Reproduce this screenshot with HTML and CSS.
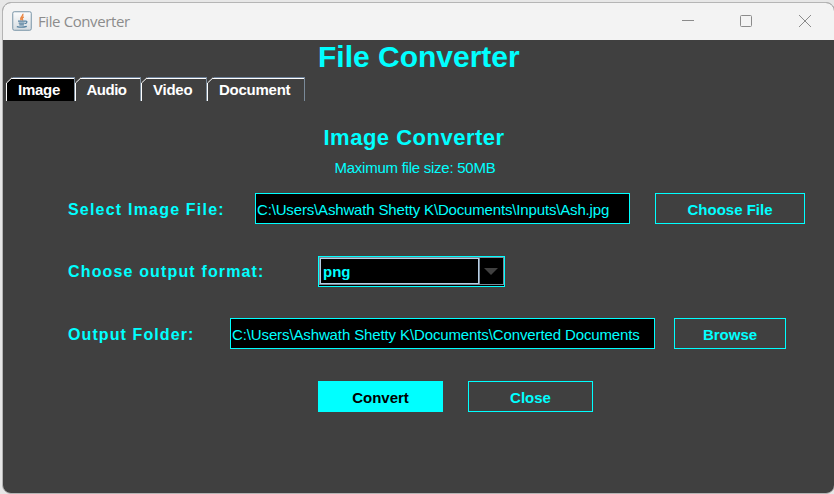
FILE: index.html
```html
<!DOCTYPE html>
<html lang="en">
<head>
<meta charset="utf-8">
<title>File Converter</title>
<link rel="stylesheet" href="styles.css">
</head>
<body>
<div class="window">
  <header class="titlebar">
    <svg class="app-icon" width="20" height="20" viewBox="0 0 20 20" fill="none">
      <defs><linearGradient id="tile" x1="0" y1="0" x2="0" y2="1"><stop offset="0" stop-color="#fdfdfd"/><stop offset="1" stop-color="#d5dce1"/></linearGradient></defs>
      <rect x=".75" y=".75" width="18.5" height="18.5" rx="1.5" fill="url(#tile)" stroke="#7894a6"/>
      <path d="M10.8 2.7c1.2 2.5-3.7 3.4-1.6 6.6M11.9 5.8c-2.3 1-1.8 2 -1.1 3.7" stroke="#ea8744" stroke-width="1.4"/>
      <path d="M6 10.2h7M6.7 12.2h5.8M7.3 13.8h4.6M4.8 15.6c3 .8 7 .7 10-.2M13 10.2c2.7-.7 2.5 2-.2 2.5" stroke="#55809f" stroke-width="1.2"/>
    </svg>
    <span class="window-name">File Converter</span>
    <svg class="controls" width="132" height="14" viewBox="0 0 132 14" fill="none" stroke="#8b8b8b">
      <path d="M0 6.5h12"/>
      <rect x="58.5" y="1.5" width="11" height="11" rx="1"/>
      <path d="M117 1l12 12M129 1l-12 12"/>
    </svg>
  </header>
  <main class="client">
    <h1 class="title">File Converter</h1>
    <nav class="tabs">
      <div class="tab active w-image"><svg class="notch" width="7" height="7"><path d="M0 0h7L0 7z" fill="#404040"/><path d="M.5 7V6L6 .8" stroke="#fff" fill="none"/></svg><span>Image</span></div>
      <div class="tab w-audio"><svg class="notch" width="7" height="7"><path d="M0 0h7L0 7z" fill="#404040"/><path d="M.5 7V6L6 .8" stroke="#fff" fill="none"/></svg><span>Audio</span></div>
      <div class="tab w-video"><svg class="notch" width="7" height="7"><path d="M0 0h7L0 7z" fill="#404040"/><path d="M.5 7V6L6 .8" stroke="#fff" fill="none"/></svg><span>Video</span></div>
      <div class="tab w-document"><svg class="notch" width="7" height="7"><path d="M0 0h7L0 7z" fill="#404040"/><path d="M.5 7V6L6 .8" stroke="#fff" fill="none"/></svg><span>Document</span></div>
    </nav>
    <h2 class="subtitle">Image Converter</h2>
    <p class="note">Maximum file size: 50MB</p>
    <section class="form">
      <div class="row">
        <span class="label label-file">Select Image File:</span>
        <div class="field field-file"><span class="path-file">C:\Users\Ashwath Shetty K\Documents\Inputs\Ash.jpg</span></div>
        <div class="button choose">Choose File</div>
      </div>
      <div class="row">
        <span class="label label-format">Choose output format:</span>
        <div class="combo">
          <div class="combo-value">png</div>
          <div class="combo-arrow"><svg width="14" height="7"><path d="M0 0h14L7 7z" fill="#404040"/></svg></div>
        </div>
      </div>
      <div class="row">
        <span class="label label-folder">Output Folder:</span>
        <div class="field field-folder"><span class="path-folder">C:\Users\Ashwath Shetty K\Documents\Converted Documents</span></div>
        <div class="button browse">Browse</div>
      </div>
      <div class="row actions">
        <div class="button primary">Convert</div>
        <div class="button close">Close</div>
      </div>
    </section>
  </main>
</div>
</body>
</html>
```
FILE: styles.css
```css
* { box-sizing: border-box; }
body {
  margin: 0;
  width: 834px;
  height: 494px;
  padding: 2px 0 0 2px;
  overflow: hidden;
  background: #e7e7e7;
  font-family: "Liberation Sans", Arial, sans-serif;
}
.window {
  width: 833px;
  height: 492px;
  border: 1px solid #b5b5b5;
  border-radius: 9px;
  overflow: hidden;
  background: #404040;
}
.titlebar {
  display: flex;
  align-items: center;
  height: 37px;
  padding: 0 20px 0 9px;
  background: #f3f3f3;
}
.app-icon { position: relative; top: -1px; }
.window-name {
  position: relative;
  top: -1px;
  margin-left: 6px;
  font: 15px/20px "Open Sans", sans-serif;
  letter-spacing: -0.4px;
  color: #8c8c8c;
}
.controls { position: relative; top: -1px; margin-left: auto; }
.client { color: #00ffff; }
.title {
  margin: 0 0 0 315px;
  font-size: 30px;
  line-height: 34px;
  height: 37px;
  white-space: nowrap;
}
.tabs {
  display: flex;
  height: 24px;
  padding-left: 3px;
  color: #fff;
  font-size: 15px;
  font-weight: bold;
  line-height: 23px;
}
.tab {
  position: relative;
  height: 24px;
  border-top: 1px solid #6d8099;
  border-right: 1px solid #7a8a99;
  box-shadow: inset 1px 1px #fff;
  padding-left: 12px;
  letter-spacing: -0.25px;
}
.active { background: #000; }
.notch { position: absolute; left: 0; top: -1px; }
.w-image { width: 69px; }
.w-audio { width: 66px; padding-left: 11.5px; letter-spacing: -0.5px; }
.w-video { width: 66px; }
.w-document { width: 98px; }
.subtitle {
  margin: 24px 0 0 320.5px;
  font-size: 22px;
  line-height: 26px;
  letter-spacing: 0.5px;
  white-space: nowrap;
}
.note {
  margin: 7px 0 0 331.5px;
  font-size: 15px;
  line-height: 20px;
  letter-spacing: -0.25px;
}
.form {
  display: grid;
  grid-template-rows: 31px 31px 31px 31px;
  row-gap: 32px;
  padding: 15px 0 0 65px;
}
.row { display: flex; height: 31px; white-space: nowrap; }
.row:nth-child(n+3) { margin-top: -1px; }
.label {
  font-size: 16px;
  font-weight: bold;
  line-height: 33px;
  letter-spacing: 1.2px;
}
.label-file { width: 187px; }
.label-format { width: 250px; letter-spacing: 1.15px; line-height: 31px; }
.label-folder { width: 162px; letter-spacing: 1.1px; }
.field {
  height: 31px;
  padding-left: 1px;
  border: 1px solid #00ffff;
  background: #000;
  font-size: 15px;
  line-height: 32px;
}
.field-file { width: 375px; }
.field-folder { width: 425px; }
.path-file { letter-spacing: -0.16px; }
.path-folder { letter-spacing: -0.12px; }
.button {
  height: 31px;
  border: 1px solid #00ffff;
  font-size: 15px;
  font-weight: bold;
  line-height: 31px;
  text-align: center;
}
.choose { width: 150px; margin-left: 25px; }
.browse { width: 112px; margin-left: 19px; }
.actions { padding-left: 250px; }
.primary { width: 125px; background: #00ffff; color: #000; }
.close { width: 125px; margin-left: 25px; }
.combo {
  display: flex;
  width: 187px;
  height: 31px;
  padding: 1px 1px 2px;
  border: 1px solid #00ffff;
  background: #000;
}
.combo-value {
  width: 159px;
  border: 1px solid #b8cfe5;
  outline: 1px solid #7a8a99;
  padding-left: 2px;
  font-size: 15px;
  font-weight: bold;
  line-height: 26px;
}
.combo-arrow {
  display: flex;
  flex: 1;
  justify-content: center;
  padding-top: 10px;
  border: 1px solid #7a8a99;
  border-left: 0;
  margin: -1px -1px -1px 0;
}
```
